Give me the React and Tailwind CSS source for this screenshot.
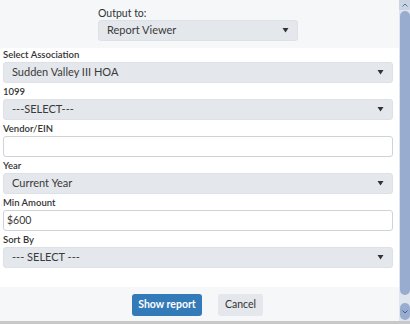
// App.jsx — report filter dialog (1099 vendor report)

import React from 'react';

const FONT = "font-['Lato','Liberation_Sans',sans-serif]";

function Caret() {
  return (
    <svg width="7" height="5" viewBox="0 0 7 5" className="shrink-0">
      <path d="M0.5 0 H6.5 L3.5 4.5 Z" fill="#333" />
    </svg>
  );
}

function Select({ value, className = '' }) {
  return (
    <div
      className={`flex h-[21px] items-center justify-between rounded-[3px] border border-[#dde1e6] bg-[#e4e7eb] pl-[8px] pr-[8px] text-[11px] text-[#3a3a3a] ${className}`}
    >
      <span>{value}</span>
      <Caret />
    </div>
  );
}

function Input({ value = '' }) {
  return (
    <div className="flex h-[21px] items-center rounded-[3px] border border-[#cfd3d8] bg-white pl-[3px] text-[10.5px] text-[#3a3a3a]">
      {value}
    </div>
  );
}

function Field({ label, children }) {
  return (
    <div className="flex flex-col">
      <div className="h-[14px] text-[9.5px] font-semibold leading-[14px] text-[#333]">{label}</div>
      {children}
    </div>
  );
}

function Scrollbar() {
  return (
    <div className="flex w-[11px] flex-col items-center bg-[#dfe5ee]">
      <div className="flex h-[10px] w-full items-center justify-center bg-[#c9d3e4]">
        <svg width="6" height="4" viewBox="0 0 6 4">
          <path d="M0.5 3.5 L3 1 L5.5 3.5" stroke="#5c6f92" strokeWidth="1" fill="none" />
        </svg>
      </div>
      <div className="mt-[1px] w-[10px] flex-1 rounded-[5px] bg-[#98acd0]" />
      <div className="mt-[8px] mb-[1px] flex h-[17px] w-[10px] items-center justify-center rounded-[5px] bg-[#98acd0]">
        <svg width="6" height="4" viewBox="0 0 6 4">
          <path d="M0.5 0.5 L3 3 L5.5 0.5" stroke="#4a5d80" strokeWidth="1" fill="none" />
        </svg>
      </div>
    </div>
  );
}

export default function App() {
  return (
    <div className={`flex h-[324px] w-[410px] flex-col bg-white ${FONT}`}>
      <div className="flex h-[321px]">
        <div className="flex w-[399px] flex-col">
          {/* Output to */}
          <div className="flex h-[48px] flex-col bg-[#f5f7f9] pl-[98px] pt-[6px]">
            <div className="h-[14px] text-[10.5px] leading-[14px] text-[#333]">Output to:</div>
            <Select value="Report Viewer" className="w-[200px]" />
          </div>

          {/* Filters */}
          <div className="flex flex-col gap-[2px] pl-[3px] pr-[6px]">
            <Field label="Select Association">
              <Select value="Sudden Valley III HOA" />
            </Field>
            <Field label="1099">
              <Select value="---SELECT---" />
            </Field>
            <Field label="Vendor/EIN">
              <Input />
            </Field>
            <Field label="Year">
              <Select value="Current Year" />
            </Field>
            <Field label="Min Amount">
              <Input value="$600" />
            </Field>
            <Field label="Sort By">
              <Select value="--- SELECT ---" />
            </Field>
          </div>

          {/* Footer */}
          <div className="mt-auto flex h-[34px] items-start justify-center gap-[16px] bg-[#f5f7f9] pt-[7px] pr-[4px]">
            <button className="h-[22px] w-[70px] rounded-[3px] bg-[#327ab8] text-[10.5px] font-bold text-white">
              Show report
            </button>
            <button className="h-[22px] w-[45px] rounded-[3px] bg-[#e4e7eb] text-[10.5px] text-[#333]">
              Cancel
            </button>
          </div>
        </div>
        <Scrollbar />
      </div>
      <div className="h-[3px] bg-[#c8c8c8]" />
    </div>
  );
}
